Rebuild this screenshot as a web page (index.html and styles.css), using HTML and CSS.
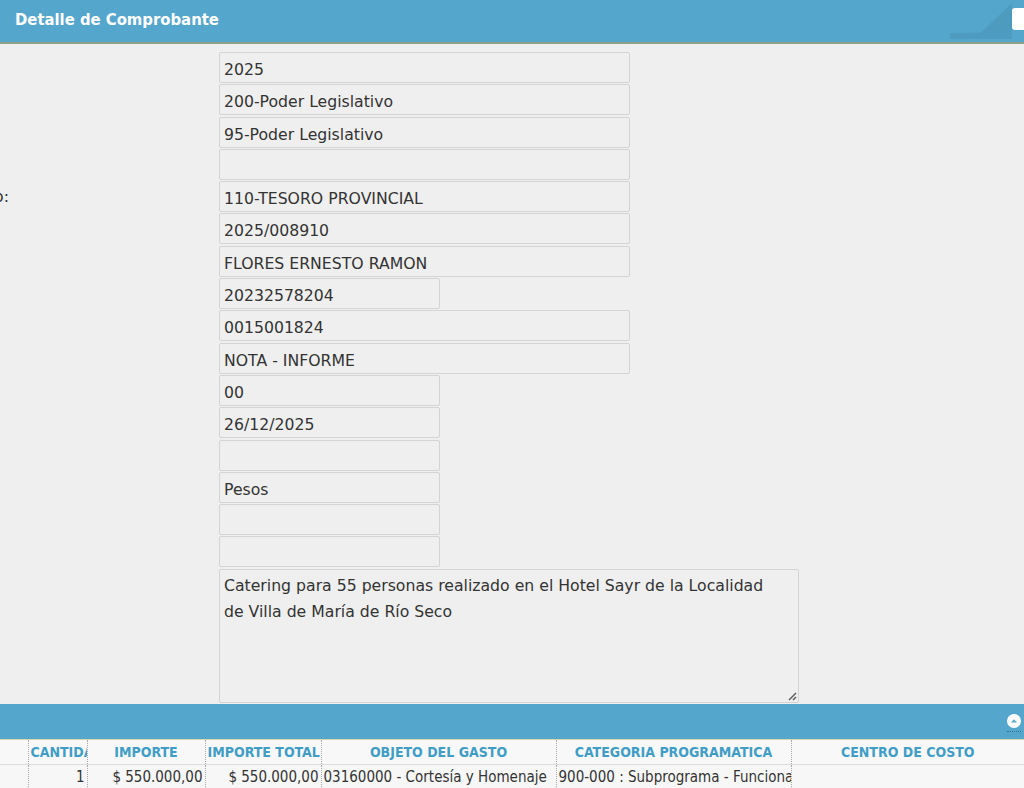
FILE: index.html
```html
<!DOCTYPE html>
<html lang="es">
<head>
    <meta charset="UTF-8">
    <title>Detalle de Comprobante</title>
    <link rel="stylesheet" href="styles.css">
</head>
<body>
    <div class="panel-header">
        <span class="panel-title">Detalle de Comprobante</span>
        <span class="panel-corner"></span>
        <span class="panel-btn"></span>
    </div>

    <div class="form">
        <div class="form-row"><div class="label"></div><div class="field wide">2025</div></div>
        <div class="form-row"><div class="label"></div><div class="field wide">200-Poder Legislativo</div></div>
        <div class="form-row"><div class="label"></div><div class="field wide">95-Poder Legislativo</div></div>
        <div class="form-row"><div class="label"></div><div class="field wide"></div></div>
        <div class="form-row"><div class="label"><span class="label-text"><span>Fuente de Financiamiento:</span></span></div><div class="field wide">110-TESORO PROVINCIAL</div></div>
        <div class="form-row"><div class="label"></div><div class="field wide">2025/008910</div></div>
        <div class="form-row"><div class="label"></div><div class="field wide">FLORES ERNESTO RAMON</div></div>
        <div class="form-row"><div class="label"></div><div class="field narrow">20232578204</div></div>
        <div class="form-row"><div class="label"></div><div class="field wide">0015001824</div></div>
        <div class="form-row"><div class="label"></div><div class="field wide">NOTA - INFORME</div></div>
        <div class="form-row"><div class="label"></div><div class="field narrow">00</div></div>
        <div class="form-row"><div class="label"></div><div class="field narrow">26/12/2025</div></div>
        <div class="form-row"><div class="label"></div><div class="field narrow"></div></div>
        <div class="form-row"><div class="label"></div><div class="field narrow">Pesos</div></div>
        <div class="form-row"><div class="label"></div><div class="field narrow"></div></div>
        <div class="form-row"><div class="label"></div><div class="field narrow"></div></div>
        <div class="form-row">
            <div class="label"></div>
            <div class="field memo">Catering para 55 personas realizado en el Hotel Sayr de la Localidad de Villa de María de Río Seco
                <svg class="grip" width="10" height="10" viewBox="0 0 10 10">
                    <path d="M9 2 L2 9 M9 6 L6 9" stroke="#555" stroke-width="1.4" fill="none"/>
                </svg>
            </div>
        </div>
    </div>

    <div class="panel-bar">
        <span class="collapse-btn">
            <svg width="14" height="14" viewBox="0 0 14 14">
                <circle cx="7" cy="7" r="7" fill="#fff"/>
                <path d="M3.8 8.6 L7 5.2 L10.2 8.6 Z" fill="#5ea9cd"/>
            </svg>
        </span>
    </div>

    <table class="grid">
        <colgroup>
            <col style="width:28px">
            <col style="width:59px">
            <col style="width:118px">
            <col style="width:116px">
            <col style="width:235px">
            <col style="width:235px">
            <col style="width:233px">
        </colgroup>
        <thead>
            <tr>
                <th></th>
                <th>CANTIDAD</th>
                <th>IMPORTE</th>
                <th>IMPORTE TOTAL</th>
                <th>OBJETO DEL GASTO</th>
                <th>CATEGORIA PROGRAMATICA</th>
                <th>CENTRO DE COSTO</th>
            </tr>
        </thead>
        <tbody>
            <tr>
                <td></td>
                <td class="num">1</td>
                <td class="num">$ 550.000,00</td>
                <td class="num">$ 550.000,00</td>
                <td>03160000 - Cortesía y Homenaje</td>
                <td>900-000 : Subprograma - Funcionamiento</td>
                <td></td>
            </tr>
        </tbody>
    </table>
</body>
</html>
```

FILE: styles.css
```css
* {
    box-sizing: border-box;
}

html, body {
    overflow: hidden;
}

body {
    margin: 0;
    background: #efefef;
    font-family: "DejaVu Sans", Tahoma, sans-serif;
    font-size: 15.7px;
    color: #333;
}

/* barra de titulo del panel */
.panel-header {
    position: relative;
    height: 44px;
    background: #55a6cc;
    border-bottom: 2px solid #8d9f86;
    display: flex;
    align-items: center;
    padding-left: 15px;
}

.panel-title {
    color: #fff;
    font-family: "DejaVu Sans Condensed", "DejaVu Sans", sans-serif;
    font-weight: bold;
    font-size: 16.5px;
    margin-top: -4px;
}

.panel-corner {
    position: absolute;
    right: 12px;
    bottom: 3px;
    width: 62px;
    height: 36px;
    background-image: radial-gradient(#3c7f9f 0.6px, transparent 0.8px);
    background-size: 2px 2px;
    clip-path: polygon(100% 0, 100% 100%, 0 100%, 0 84%, 50% 82%);
    opacity: 0.6;
}

.panel-btn {
    position: absolute;
    right: -6px;
    top: 8px;
    width: 18px;
    height: 22px;
    background: #fff;
    border-radius: 3px;
}

/* formulario */
.form {
    padding-top: 8px;
    display: flex;
    flex-direction: column;
    gap: 1.3px;
}

.form-row {
    display: flex;
}

.label {
    width: 219px;
    flex: none;
    display: flex;
    align-items: center;
}

.label-text {
    width: 9px;
    display: flex;
    justify-content: flex-end;
    white-space: nowrap;
}

.field {
    height: 31px;
    background: #efefef;
    border: 1px solid #d4d4d4;
    border-radius: 2px;
    padding: 2px 4px 0;
    line-height: 29px;
    white-space: nowrap;
    color: #333;
}

.field.wide {
    width: 411px;
}

.field.narrow {
    width: 221px;
}

.field.memo {
    position: relative;
    width: 580px;
    height: 134px;
    line-height: 26px;
    padding: 3px 20px 0 4px;
    white-space: normal;
}

.grip {
    position: absolute;
    right: 1px;
    bottom: 1px;
}

/* barra de detalle */
.panel-bar {
    margin-top: 1px;
    height: 36px;
    background: #55a6cc;
    border-bottom: 1px solid #d9d6b0;
    display: flex;
    align-items: center;
    justify-content: flex-end;
    padding-right: 1px;
}

.collapse-btn {
    display: flex;
    margin-right: 2px;
    margin-top: 4px;
    padding-bottom: 3px;
    border-bottom: 1px dotted #2f6f8f;
}

.grid {
    border-collapse: collapse;
    table-layout: fixed;
    width: 1024px;
    background: #f7f7f7;
    font-family: "DejaVu Sans Condensed", "DejaVu Sans", sans-serif;
    font-size: 15px;
}

.grid th {
    height: 25px;
    color: #3f9dc6;
    font-size: 14px;
    font-weight: bold;
    text-align: center;
    border-left: 1px dotted #aaa;
    border-bottom: 1px solid #ddd;
    background: #f8f8f8;
    white-space: nowrap;
    overflow: hidden;
    padding: 0 2px;
}

.grid td {
    height: 24px;
    border-left: 1px dotted #aaa;
    white-space: nowrap;
    overflow: hidden;
    padding: 0 2px;
    color: #333;
}

.grid td.num {
    text-align: right;
}

.grid th:first-child,
.grid td:first-child {
    border-left: none;
}
```
